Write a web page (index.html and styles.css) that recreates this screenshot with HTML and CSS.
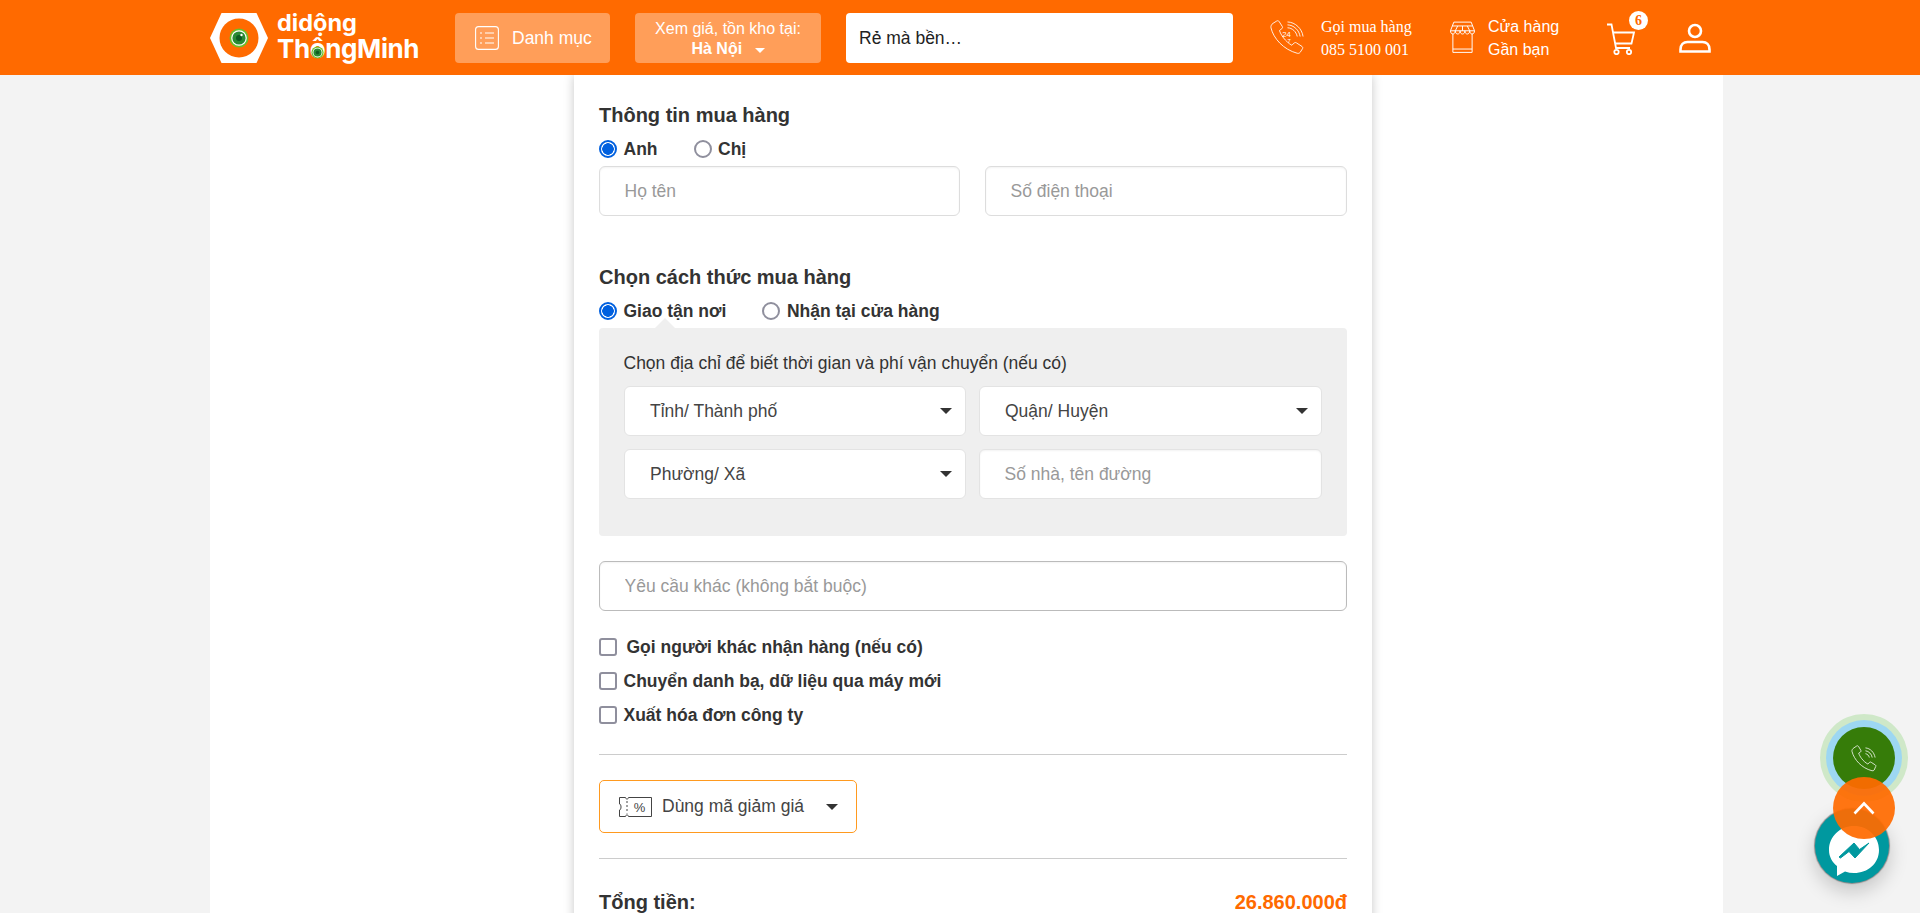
FILE: index.html
```html
<!DOCTYPE html>
<html lang="vi">
<head>
<meta charset="utf-8">
<title>Thông tin mua hàng</title>
<link rel="stylesheet" href="styles.css">
</head>
<body>
<header class="topbar">
  <div class="topbar-inner">
    <a class="logo">
      <svg class="logo-mark" viewBox="0 0 58 50" width="58" height="50">
        <path d="M11.500 0H46.500L58 25L46.500 50H11.500L0 25Z" fill="#fff"/>
        <circle cx="29" cy="25" r="19.500" fill="#ff6a00"/>
        <circle cx="29" cy="25" r="9.500" fill="#6cbf2a"/>
        <circle cx="29" cy="25" r="7.800" fill="#fff"/>
        <circle cx="29" cy="25" r="6.600" fill="#2a8a35"/>
        <circle cx="29" cy="25" r="3" fill="#0f5a22"/>
        <circle cx="31.500" cy="22" r="1.200" fill="#fff"/>
      </svg>
      <span class="logo-text">
        <span class="logo-l1">didộng</span>
        <span class="logo-l2">Th<span class="logo-o">ô<svg class="logo-eye" viewBox="0 0 16 16" width="13" height="13"><circle cx="8" cy="8" r="7.500" fill="#6cbf2a"/><circle cx="8" cy="8" r="6" fill="#fff"/><circle cx="8" cy="8" r="5" fill="#2a8a35"/><circle cx="8" cy="8" r="2.200" fill="#0f5a22"/></svg></span>ngMinh</span>
      </span>
    </a>
    <button class="btn-menu">
      <svg viewBox="0 0 24 24" width="24" height="24" fill="none" stroke="#fff" stroke-width="1.100"><rect x="0.600" y="0.600" width="22.800" height="22.800" rx="3"/><path d="M5 7h2M10 7h9M5 12h2M10 12h9M5 17h2M10 17h9"/></svg>
      <span>Danh mục</span>
    </button>
    <button class="btn-loc">
      <span>Xem giá, tồn kho tại:</span>
      <b>Hà Nội <i class="caret caret-white"></i></b>
    </button>
    <input class="search" type="text" value="Rẻ mà bền…">
    <a class="hotline">
      <svg viewBox="0 0 36 36" width="35" height="35" fill="none" stroke="#fff" stroke-width="0.900"><path d="M3 3.500L7 1c1-.5 1.800-.3 2.400.6l3.200 5c.5.9.4 1.600-.4 2.300L9.800 10.800c1 4 6 11.500 12.700 15.200l2.400-2.400c.8-.6 1.600-.6 2.400 0l5.600 3.600c.9.7 1 1.600.4 2.500l-2.300 3.600c-.7.9-1.800 1.200-3 .9C14 30.500 3.500 19 1 8c-.3-2 .6-3.500 2-4.500z"/><path d="M18 2c8 .2 15 7 16 15M18 5c6.500.2 12 5.500 13 12M18 8c5 .2 9 4 10 9"/><text x="12.500" y="17" font-size="8" fill="#fff" stroke="none" font-family="Liberation Sans, sans-serif">24</text><text x="18" y="24" font-size="6" fill="#fff" stroke="none" font-family="Liberation Sans, sans-serif">7</text></svg>
      <span class="hotline-text"><span>Gọi mua hàng</span><span>085 5100 001</span></span>
    </a>
    <a class="stores">
      <svg viewBox="0 0 26 34" width="25" height="33" fill="none" stroke="#fff" stroke-width="1"><path d="M3 13V32.500H23V13"/><path d="M3 29h20"/><path d="M4 1h18l3.500 9H.5z"/><path d="M.5 10c0 4.500 5 4.500 5 0c0 4.500 5 4.500 5 0c0 4.500 5 4.500 5 0c0 4.500 5 4.500 5 0c0 4.500 5 4.500 5 0"/><path d="M8 5L5.500 10M13 5v5M18 5l2.500 5M2.500 5h21"/></svg>
      <span class="stores-text"><span>Cửa hàng</span><span>Gần bạn</span></span>
    </a>
    <a class="cart">
      <svg viewBox="0 0 30 32" width="30" height="32" fill="none" stroke="#fff" stroke-width="1.800"><path d="M1 1.500h4.500L10 25h14"/><path d="M7 9.500h21l-2.500 11H9"/><circle cx="10.500" cy="29" r="2.200"/><circle cx="23" cy="29" r="2.200"/></svg>
      <span class="badge">6</span>
    </a>
    <a class="user">
      <svg viewBox="0 0 32 30" width="32" height="30" fill="none" stroke="#fff" stroke-width="2.600"><circle cx="16" cy="8" r="6"/><path d="M1.500 28.500v-2c0-5 3-7.500 7-7.500h15c4 0 7 2.500 7 7.500v2z"/></svg>
    </a>
  </div>
</header>

<main class="page">
  <section class="card">
    <h2 class="heading first">Thông tin mua hàng</h2>
    <div class="radios gender">
      <label class="opt"><input type="radio" name="g" checked>Anh</label>
      <label class="opt"><input type="radio" name="g">Chị</label>
    </div>
    <div class="two">
      <input class="field" type="text" placeholder="Họ tên">
      <input class="field" type="text" placeholder="Số điện thoại">
    </div>

    <h2 class="heading second">Chọn cách thức mua hàng</h2>
    <div class="radios ship">
      <label class="opt"><input type="radio" name="s" checked>Giao tận nơi</label>
      <label class="opt"><input type="radio" name="s">Nhận tại cửa hàng</label>
    </div>
    <div class="address">
      <p class="address-title">Chọn địa chỉ để biết thời gian và phí vận chuyển (nếu có)</p>
      <div class="address-grid">
        <div class="select">Tỉnh/ Thành phố<i class="caret"></i></div>
        <div class="select">Quận/ Huyện<i class="caret"></i></div>
        <div class="select">Phường/ Xã<i class="caret"></i></div>
        <input class="field plain" type="text" placeholder="Số nhà, tên đường">
      </div>
    </div>

    <input class="field note" type="text" placeholder="Yêu cầu khác (không bắt buộc)">

    <div class="checks">
      <label class="opt"><input type="checkbox"><span class="wide">Gọi người khác nhận hàng (nếu có)</span></label>
      <label class="opt"><input type="checkbox">Chuyển danh bạ, dữ liệu qua máy mới</label>
      <label class="opt"><input type="checkbox">Xuất hóa đơn công ty</label>
    </div>

    <hr class="rule">
    <div class="coupon">
      <svg viewBox="0 0 33 20" width="33" height="20" fill="none" stroke="#444" stroke-width="1"><path d="M.5 .5H6.500c0 2 3 2 3 0H32.500V19.500H9.500c0-2-3-2-3 0H.5V13c2 0 2-6 0-6z"/><path d="M8 4v12.500" stroke-dasharray="2 2"/><text x="20.500" y="15" font-size="13" text-anchor="middle" fill="#444" stroke="none" font-family="Liberation Sans, sans-serif">%</text></svg>
      <span>Dùng mã giảm giá</span>
      <i class="caret"></i>
    </div>
    <hr class="rule">
    <div class="total"><span>Tổng tiền:</span><span class="price">26.860.000đ</span></div>
  </section>
</main>

<div class="float-call">
  <svg viewBox="0 0 28 28" width="27" height="27" fill="none" stroke="#fff" stroke-width="0.800"><path d="M3 3l3-2c.8-.4 1.300-.2 1.800.5l2.400 4c.4.7.3 1.200-.3 1.700L8 8.500c.8 3 4.500 8.500 9.500 11.300l1.700-1.800c.6-.5 1.200-.5 1.800 0l4.200 2.700c.7.5.8 1.200.3 1.900L24 26c-.5.7-1.300.9-2.200.7C11 24 3 15 1 6.500c-.2-1.500.8-2.700 2-3.500z"/><path d="M15 3c5 .5 9 4.500 10 10M15 6c3.500.4 6.500 3.500 7 7M15 9c2 .3 3.600 2 4 4"/></svg>
</div>
<div class="float-msg">
  <svg viewBox="0 0 50 50" width="50" height="50"><path d="M25 0C11 0 0 10.500 0 24c0 6.500 3 12 8 16v10l8-4.500c3 1 6 1.500 9 1.500 14 0 25-9.500 25-23S39 0 25 0z" fill="#fff"/><path d="M10 31L25 17l5.500 6.500L40 17 26 32l-6-6.500L11.500 32z" fill="#00989f" stroke="#00989f" stroke-width="1" stroke-linejoin="round"/></svg>
</div>
<div class="float-top">
  <svg viewBox="0 0 22 14" width="22" height="14" fill="none" stroke="#fff" stroke-width="2.600"><path d="M1.500 12.500L11 2.500l9.500 10"/></svg>
</div>
</body>
</html>
```
FILE: styles.css
```css
* { box-sizing: border-box; }
html, body { margin: 0; height: 913px; overflow: hidden; }
body {
  background: #f3f3f3;
  font-family: "Liberation Sans", Arial, sans-serif;
  color: #333;
  font-size: 17.5px;
}
a { color: inherit; text-decoration: none; }

.topbar { height: 75px; background: #ff6a00; position: relative; z-index: 2; }
.topbar-inner { display: flex; align-items: center; height: 75px; margin-left: 209px; width: 1514px; color: #fff; }

.logo { display: flex; align-items: center; width: 211px; margin-right: 35px; white-space: nowrap; }
.logo-mark { flex: none; margin-left: 1px; }
.logo-text { display: flex; flex-direction: column; margin: -3px 0 0 9px; color: #fff; font-family: Inter, "Liberation Sans", sans-serif; font-weight: 700; }
.logo-l1 { font-size: 23.5px; line-height: 25px; font-weight: 700; }
.logo-l2 { font-size: 26px; line-height: 27px; letter-spacing: -0.4px; }
.logo-o { position: relative; display: inline-block; }
.logo-eye { position: absolute; left: 1.5px; top: 11px; }

.btn-menu, .btn-loc {
  border: 0;
  height: 50px;
  border-radius: 4px;
  background: rgba(255, 255, 255, 0.35);
  color: #fff;
  font-family: inherit;
  padding: 0;
}
.btn-menu { width: 155px; display: flex; align-items: center; gap: 13px; padding: 1px 0 0 20px; font-size: 17.5px; margin-right: 25px; }
.btn-loc { width: 186px; display: flex; flex-direction: column; align-items: center; justify-content: center; padding-top: 2px; font-size: 16px; line-height: 20px; margin-right: 25px; }
.btn-loc b { font-size: 16px; }

.search { width: 387px; height: 50px; border: 0; border-radius: 4px; padding: 1px 13px 0; font: 17.5px "Liberation Sans", Arial, sans-serif; color: #222; margin-right: 37px; background: #fff; }

.hotline { display: flex; align-items: center; gap: 16px; width: 180px; }
.hotline-text { display: flex; flex-direction: column; font-family: "Liberation Serif", "Times New Roman", serif; font-size: 16px; line-height: 23px; }
.stores { display: flex; align-items: center; gap: 13px; width: 156px; }
.stores-text { display: flex; flex-direction: column; font-size: 16px; line-height: 23px; }
.cart { position: relative; display: block; width: 73px; height: 32px; margin-top: 2px; }
.badge { position: absolute; left: 23px; top: -12px; width: 19px; height: 19px; border-radius: 50%; background: #fff; color: #ff6a00; font: 700 14px/19px "Liberation Serif", serif; text-align: center; }
.user { display: block; height: 30px; }

.caret { display: inline-block; width: 0; height: 0; border-left: 6px solid transparent; border-right: 6px solid transparent; border-top: 6px solid #333; }
.caret-white { border-top-color: #fff; margin-left: 8px; vertical-align: 1px; border-left-width: 5.500px; border-right-width: 5.500px; border-top-width: 5.500px; }

.page { margin-left: 210px; width: 1513px; height: 838px; background: #fff; overflow: hidden; }
.card { margin-left: 364px; width: 798px; height: 860px; padding: 26px 25px 0 25px; background: #fff; box-shadow: 0 0 10px rgba(0, 0, 0, 0.22); }

.heading { margin: 0; font-size: 20px; line-height: 24px; font-weight: 700; color: #333; }
.first { margin-top: 2px; }
.second { margin-top: 49px; }

.radios { display: flex; height: 24px; margin-top: 10px; align-items: center; }
.gender { gap: 36px; }
.ship { gap: 36px; }
.opt { display: flex; align-items: center; font-weight: 700; font-size: 17.5px; color: #333; }
.opt input { appearance: none; -webkit-appearance: none; width: 18px; height: 18px; margin: 0 6.5px 0 0; border: 2px solid #8f8f9d; background: #fff; flex: none; }
input[type="radio"] { border-radius: 50%; }
input[type="radio"]:checked { border-color: #0060df; background: radial-gradient(circle, #0060df 0 5.500px, #fff 6px); }
input[type="checkbox"] { border-radius: 3px; }

.two { display: grid; grid-template-columns: 361px 362px; gap: 25px; margin-top: 5px; }
.field { height: 50px; border: 1px solid #ddd; border-radius: 6px; padding: 0 24.5px; font: 17.5px "Liberation Sans", Arial, sans-serif; background: #fff; color: #333; width: 100%; box-shadow: inset 0 1px 2px rgba(0, 0, 0, 0.05); }
.field::placeholder { color: #999; opacity: 1; }
.plain { border-color: #e3e3e3; }
.note { display: block; margin-top: 25px; height: 50px; border-color: #bbb; }

.address { position: relative; margin-top: 5px; height: 208px; padding: 23px 25px 0; background: #efefef; border-radius: 4px; }
.address::before { content: ""; position: absolute; left: 56px; top: -10px; border-left: 10px solid transparent; border-right: 10px solid transparent; border-bottom: 10px solid #efefef; }
.address-title { margin: 0 0 0 -0.5px; font-size: 17.5px; line-height: 24px; color: #333; }
.address-grid { display: grid; grid-template-columns: 342px 343px; grid-auto-rows: 50px; column-gap: 13px; row-gap: 13px; margin-top: 11px; }
.select { display: flex; align-items: center; justify-content: space-between; padding: 0 13px 0 25px; background: #fff; border: 1px solid #e3e3e3; border-radius: 6px; color: #444; }

.checks { display: flex; flex-direction: column; gap: 10px; margin-top: 24px; }
.checks .opt { height: 24px; }
.wide { margin-left: 3px; }

.rule { margin: 25px 0 0; border: 0; border-top: 1px solid #ccc; }
.checks + .rule { margin-top: 27px; }
.coupon { display: flex; align-items: center; width: 258px; height: 53px; margin-top: 25px; padding: 0 18px 0 19px; border: 1px solid #ff9a1f; border-radius: 5px; color: #444; }
.coupon span { margin-left: 10px; flex: 1; }
.total { display: flex; justify-content: space-between; margin-top: 31px; font-size: 20px; line-height: 24px; font-weight: 700; color: #333; }
.price { color: #ff6a00; }

.float-call, .float-msg, .float-top { position: fixed; border-radius: 50%; display: flex; align-items: center; justify-content: center; }
.float-call { left: 1833px; top: 727px; width: 62px; height: 62px; background: #367c09; box-shadow: 0 0 0 7px #9dd7f2, 0 0 0 13px #cfe8c8; z-index: 3; }
.float-msg { left: 1815px; top: 809px; width: 74px; height: 74px; padding: 9px 0 0 4px; background: #00989f; box-shadow: 0 0 1px 1px #888, 0 8px 20px rgba(0, 0, 0, 0.2); z-index: 4; }
.float-top { left: 1833px; top: 777px; width: 62px; height: 62px; background: rgba(255, 106, 0, 0.93); z-index: 5; }
```
